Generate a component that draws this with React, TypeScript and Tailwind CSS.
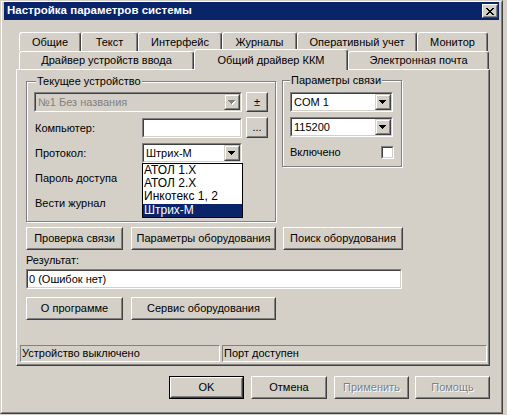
import React from "react";

const FONT = "font-['Liberation_Sans',Arial,sans-serif]";

function Raised({
  className = "",
  children,
  def = false,
}: {
  className?: string;
  children?: React.ReactNode;
  def?: boolean;
}) {
  const core = (
    <div className="h-full w-full border border-t-white border-l-white border-r-[#404040] border-b-[#404040]">
      <div className="h-full w-full border border-t-[#d4d0c8] border-l-[#d4d0c8] border-r-[#808080] border-b-[#808080] flex items-center justify-center whitespace-nowrap">
        {children}
      </div>
    </div>
  );
  if (def) return <div className={`${className} border border-black`}>{core}</div>;
  return <div className={className}>{core}</div>;
}

function Sunken({
  className = "",
  bg = "bg-white",
  children,
}: {
  className?: string;
  bg?: string;
  children?: React.ReactNode;
}) {
  return (
    <div className={`${className} border border-t-[#808080] border-l-[#808080] border-r-white border-b-white`}>
      <div className={`h-full w-full border border-t-[#404040] border-l-[#404040] border-r-[#d4d0c8] border-b-[#d4d0c8] ${bg}`}>
        {children}
      </div>
    </div>
  );
}

function Tri({ disabled = false }: { disabled?: boolean }) {
  const rows = [
    [0, 7],
    [1, 5],
    [2, 3],
    [3, 1],
  ];
  return (
    <svg width="8" height="5" viewBox="0 0 8 5" shapeRendering="crispEdges">
      {disabled &&
        rows.map(([y, w], i) => (
          <rect key={"s" + i} x={(7 - w) / 2 + 1} y={y + 1} width={w} height={1} fill="#ffffff" />
        ))}
      {rows.map(([y, w], i) => (
        <rect key={i} x={(7 - w) / 2} y={y} width={w} height={1} fill={disabled ? "#808080" : "#000000"} />
      ))}
    </svg>
  );
}

function ArrowBtn({ disabled = false }: { disabled?: boolean }) {
  return (
    <div className="w-[16px] h-full border border-t-[#d4d0c8] border-l-[#d4d0c8] border-r-[#404040] border-b-[#404040]">
      <div className="h-full w-full border border-t-white border-l-white border-r-[#808080] border-b-[#808080] flex items-center justify-center bg-[#d4d0c8]">
        <Tri disabled={disabled} />
      </div>
    </div>
  );
}

function Combo({
  className = "",
  text,
  disabled = false,
}: {
  className?: string;
  text: string;
  disabled?: boolean;
}) {
  return (
    <Sunken className={className} bg={disabled ? "bg-[#d4d0c8]" : "bg-white"}>
      <div className="flex h-full">
        <div
          className={`flex-1 pl-[2px] flex items-center whitespace-nowrap ${
            disabled ? "text-[#808080]" : "text-black"
          }`}
        >
          {text}
        </div>
        <ArrowBtn disabled={disabled} />
      </div>
    </Sunken>
  );
}

function Tab({
  className = "",
  children,
}: {
  className?: string;
  children?: React.ReactNode;
}) {
  return (
    <div
      className={`${className} border-t border-l border-r border-t-white border-l-white border-r-[#404040] rounded-tl-[3px] rounded-tr-[3px] shadow-[inset_-1px_0_0_#808080] flex justify-center whitespace-nowrap bg-[#d4d0c8]`}
    >
      {children}
    </div>
  );
}

function Group({
  className = "",
  title,
  titleLeft,
  children,
}: {
  className?: string;
  title: string;
  titleLeft: string;
  children?: React.ReactNode;
}) {
  return (
    <div className={`${className} relative border border-[#808080] shadow-[inset_1px_1px_0_#fff,1px_1px_0_#fff]`}>
      <div className={`absolute -top-[7px] ${titleLeft} px-[1px] bg-[#d4d0c8] leading-[13px] whitespace-nowrap`}>
        {title}
      </div>
      {children}
    </div>
  );
}

function CloseIcon() {
  const rows = [
    [0, 1, 6, 7],
    [1, 2, 5, 6],
    [2, 3, 4, 5],
    [3, 4],
    [2, 3, 4, 5],
    [1, 2, 5, 6],
    [0, 1, 6, 7],
  ];
  return (
    <svg width="8" height="7" viewBox="0 0 8 7" shapeRendering="crispEdges">
      {rows.map((xs, y) =>
        xs.map((x) => <rect key={y + "-" + x} x={x} y={y} width={1} height={1} fill="#000" />)
      )}
    </svg>
  );
}

export default function App() {
  const disabledText = "text-[#808080] [text-shadow:1px_1px_0_#fff]";
  return (
    <div className={`w-[507px] h-[415px] bg-[#d4d0c8] overflow-hidden text-[11px] leading-[13px] text-black ${FONT}`}>
      <div className="w-[503px] h-[414px] border border-t-[#d4d0c8] border-l-[#d4d0c8] border-r-[#404040] border-b-[#404040]">
        <div className="w-full h-full border border-t-white border-l-white border-r-[#808080] border-b-[#808080] px-[2px] flex flex-col">
          {/* Title bar */}
          <div className="h-[18px] shrink-0 bg-[#0a246a] flex items-center justify-between pl-[3px] pr-[1px]">
            <span className="text-white font-bold text-[11.5px] leading-none whitespace-nowrap">
              Настройка параметров системы
            </span>
            <Raised className="w-[16px] h-[14px] bg-[#d4d0c8]">
              <CloseIcon />
            </Raised>
          </div>

          {/* Tab control */}
          <div className="ml-[12px] mt-[12px] w-[474px] shrink-0">
            <div className="flex h-[19px] pl-[3px]">
              <Tab className="w-[62px] items-center">Общие</Tab>
              <Tab className="w-[57px] items-center">Текст</Tab>
              <Tab className="w-[84px] items-center">Интерфейс</Tab>
              <Tab className="w-[75px] items-center">Журналы</Tab>
              <Tab className="w-[120px] items-center">Оперативный учет</Tab>
              <Tab className="w-[71px] items-center">Монитор</Tab>
            </div>
            <div className="flex items-end h-[18px] pl-[3px]">
              <Tab className="w-[175px] h-[18px] items-center">Драйвер устройств ввода</Tab>
              <Tab className="w-[154px] h-[21px] -mb-[1px] relative z-10 items-start pt-[4px]">
                Общий драйвер ККМ
              </Tab>
              <Tab className="w-[141px] h-[18px] items-center">Электронная почта</Tab>
            </div>

            {/* Panel */}
            <div className="h-[297px] border border-t-white border-l-white border-r-[#404040] border-b-[#404040] shadow-[inset_-1px_-1px_0_#808080]">
              <div className="pl-[9px] flex flex-col">
                {/* groups */}
                <div className="flex mt-[11px]">
                  <Group className="w-[250px] h-[141px]" title="Текущее устройство" titleLeft="left-[9px]">
                    <div className="pl-[7px] pt-[10px] flex flex-col">
                      <div className="flex h-[20px]">
                        <Combo className="w-[208px] h-[20px]" text="№1 Без названия" disabled />
                        <Raised className="w-[22px] h-[20px] ml-[4px]">±</Raised>
                      </div>
                      <div className="flex items-center h-[20px] mt-[6px]">
                        <div className="w-[108px] pl-[1px]">Компьютер:</div>
                        <Sunken className="w-[100px] h-[20px]" />
                        <Raised className="w-[22px] h-[21px] ml-[4px] -mt-[1px]">...</Raised>
                      </div>
                      <div className="flex items-center h-[20px] mt-[5px]">
                        <div className="w-[108px] pl-[1px]">Протокол:</div>
                        <div className="relative w-[100px] h-[20px]">
                          <Combo className="w-[100px] h-[20px]" text="Штрих-М" />
                          <div className="absolute left-0 top-[20px] w-[101px] border border-black bg-white z-20 text-[12px] leading-[13px]">
                            <div className="h-[13px] pl-[1px]">АТОЛ 1.X</div>
                            <div className="h-[13px] pl-[1px]">АТОЛ 2.X</div>
                            <div className="h-[14px] pl-[1px]">Инкотекс 1, 2</div>
                            <div className="h-[13px] pl-[1px] bg-[#0a246a] text-white">Штрих-М</div>
                          </div>
                        </div>
                      </div>
                      <div className="flex items-center h-[20px] mt-[5px] pl-[1px]">Пароль доступа</div>
                      <div className="flex items-center h-[20px] mt-[5px] pl-[1px]">Вести журнал</div>
                    </div>
                  </Group>
                  <Group className="w-[120px] h-[87px] ml-[6px] -mt-[1px]" title="Параметры связи" titleLeft="left-[7px]">
                    <div className="pl-[7px] pt-[11px] flex flex-col">
                      <Combo className="w-[103px] h-[20px]" text="COM 1" />
                      <Combo className="w-[103px] h-[20px] mt-[5px]" text="115200" />
                      <div className="flex items-center justify-between w-[104px] h-[13px] mt-[9px]">
                        <span>Включено</span>
                        <Sunken className="w-[13px] h-[13px]" />
                      </div>
                    </div>
                  </Group>
                </div>

                {/* buttons row 1 */}
                <div className="flex mt-[5px]">
                  <Raised className="w-[97px] h-[23px]">Проверка связи</Raised>
                  <Raised className="w-[145px] h-[23px] ml-[8px]">Параметры оборудования</Raised>
                  <Raised className="w-[120px] h-[23px] ml-[7px]">Поиск оборудования</Raised>
                </div>

                <div className="mt-[3px] h-[14px] leading-[14px]">Результат:</div>
                <Sunken className="w-[376px] h-[20px] mt-[2px]">
                  <div className="h-full flex items-center pl-[1px]">0 (Ошибок нет)</div>
                </Sunken>

                {/* buttons row 2 */}
                <div className="flex mt-[8px]">
                  <Raised className="w-[97px] h-[23px]">О программе</Raised>
                  <Raised className="w-[145px] h-[23px] ml-[8px]">Сервис оборудования</Raised>
                </div>

                {/* status bar */}
                <div className="flex mt-[25px] -ml-[6px]">
                  <div className="w-[200px] h-[17px] border border-t-[#808080] border-l-[#808080] border-r-white border-b-white flex items-center pl-[1px] whitespace-nowrap">
                    Устройство выключено
                  </div>
                  <div className="w-[265px] h-[17px] ml-[2px] border border-t-[#808080] border-l-[#808080] border-r-white border-b-white flex items-center pl-[1px] whitespace-nowrap">
                    Порт доступен
                  </div>
                </div>
              </div>
            </div>
          </div>

          {/* dialog buttons */}
          <div className="flex mt-[10px] pl-[165px]">
            <Raised className="w-[75px] h-[23px]" def>
              OK
            </Raised>
            <Raised className="w-[76px] h-[23px] ml-[7px]">Отмена</Raised>
            <Raised className="w-[75px] h-[23px] ml-[7px]">
              <span className={disabledText}>Применить</span>
            </Raised>
            <Raised className="w-[75px] h-[23px] ml-[6px]">
              <span className={disabledText}>Помощь</span>
            </Raised>
          </div>
        </div>
      </div>
    </div>
  );
}
